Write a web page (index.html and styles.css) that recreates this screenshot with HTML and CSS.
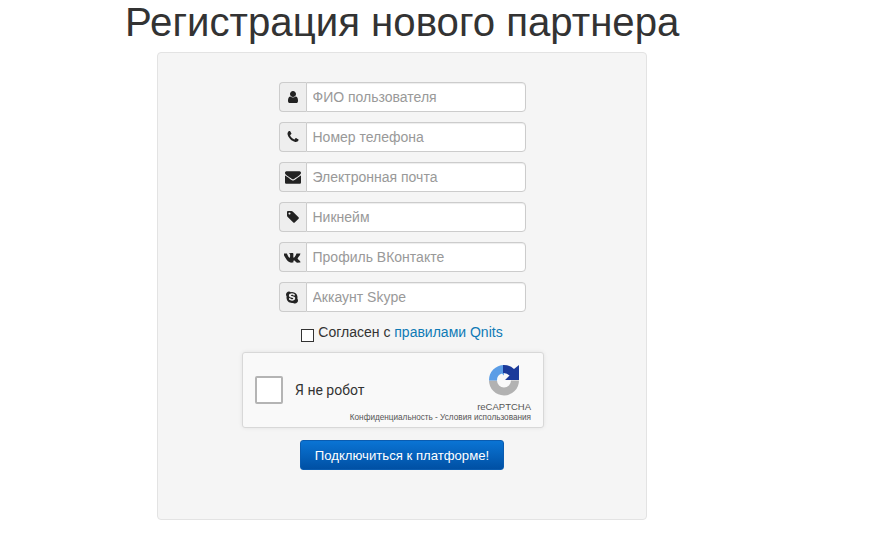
FILE: index.html
```html
<!DOCTYPE html>
<html lang="ru">
<head>
    <meta charset="UTF-8">
    <meta name="viewport" content="width=device-width, initial-scale=1.0">
    <title>Регистрация нового партнера</title>
    <link rel="stylesheet" href="styles.css">
</head>
<body>

    <h1 class="page-title">Регистрация нового партнера</h1>

    <div class="well">
        <form class="reg-form">
            <div class="input-group">
                <span class="addon">
                    <svg class="icon" viewBox="0 0 1792 1792"><path d="M1536 1399q0 109-62.5 187t-150.5 78h-854q-88 0-150.5-78t-62.5-187q0-85 8.5-160.5t31.5-152 58.5-131 94-89 134.5-34.5q131 128 313 128t313-128q76 0 134.5 34.5t94 89 58.5 131 31.5 152 8.5 160.5zm-256-887q0 159-112.5 271.5t-271.5 112.5-271.5-112.5-112.5-271.5 112.5-271.5 271.5-112.5 271.5 112.5 112.5 271.5z"/></svg>
                </span>
                <input type="text" placeholder="ФИО пользователя">
            </div>
            <div class="input-group">
                <span class="addon">
                    <svg class="icon" viewBox="0 0 1792 1792"><path d="M1600 1240q0 27-10 70.5t-21 68.5q-21 50-122 106-94 51-186 51-27 0-53-3.5t-57.5-12.5-47-14.5-55.5-20.5-49-18q-98-35-175-83-127-79-264-216t-216-264q-48-77-83-175-3-9-18-49t-20.5-55.5-14.5-47-12.5-57.5-3.5-53q0-92 51-186 56-101 106-122 25-11 68.5-21t70.5-10q14 0 21 3 18 6 53 76 11 19 30 54t35 63.5 31 53.5q3 4 17.5 25t21.5 35.5 7 28.5q0 20-28.5 50t-62 55-62 53-28.5 46q0 9 5 22.5t8.5 20.5 14 24 11.5 19q76 137 174 235t235 174q2 1 19 11.5t24 14 20.5 8.5 22.5 5q18 0 46-28.5t53-62 55-62 50-28.5q14 0 28.5 7t35.5 21.5 25 17.5q25 15 53.5 31t63.5 35 54 30q70 35 76 53 3 7 3 21z"/></svg>
                </span>
                <input type="text" placeholder="Номер телефона">
            </div>
            <div class="input-group">
                <span class="addon">
                    <svg class="icon icon-mail" viewBox="0 0 1792 1792"><path d="M1792 710v794q0 66-47 113t-113 47h-1472q-66 0-113-47t-47-113v-794q44 49 101 87 362 246 497 345 57 42 92.5 65.5t94.5 48 110 24.5h2q51 0 110-24.5t94.5-48 92.5-65.5q170-123 498-345 57-39 100-87zm0-294q0 79-49 151t-122 123q-376 261-468 325-10 7-42.5 30.5t-54 38-52 32.5-57.5 27-50 9h-2q-23 0-50-9t-57.5-27-52-32.5-54-38-42.5-30.5q-91-64-262-182.5t-205-142.5q-62-42-117-115.5t-55-136.5q0-78 41.5-130t118.5-52h1472q65 0 112.5 47t47.5 113z"/></svg>
                </span>
                <input type="text" placeholder="Электронная почта">
            </div>
            <div class="input-group">
                <span class="addon">
                    <svg class="icon" viewBox="0 0 1792 1792"><path d="M576 448q0-53-37.5-90.5t-90.5-37.5-90.5 37.5-37.5 90.5 37.5 90.5 90.5 37.5 90.5-37.5 37.5-90.5zm1067 576q0 53-37 90l-491 492q-39 37-91 37-53 0-90-37l-715-716q-38-37-64.5-101t-26.5-117v-416q0-52 38-90t90-38h416q53 0 117 26.5t102 64.5l715 714q37 39 37 91z"/></svg>
                </span>
                <input type="text" placeholder="Никнейм">
            </div>
            <div class="input-group">
                <span class="addon">
                    <svg class="icon icon-wide" viewBox="0 0 1920 1792"><path d="M1853 520q23 64-150 294-24 32-65 85-78 100-90 131-17 41 14 81 17 21 81 82h1l1 1 1 1 2 2q141 131 191 221 3 5 6.5 12.5t7 26.5-.5 34-25 27.5-59 12.5l-256 4q-24 5-56-5t-52-22l-20-12q-30-21-70-64t-68.5-77.5-61-58-56.5-15.5q-3 1-8 3.5t-17 14.5-21.5 29.5-17 52-6.5 77.5q0 15-3.5 27.5t-7.5 18.5l-4 5q-18 19-53 22h-115q-71 4-146-16.5t-131.5-53-103-66-70.5-57.5l-25-24q-10-10-27.5-30t-71.5-91-106-151-122.5-211-130.5-272q-6-16-6-27t3-16l4-6q15-19 57-19l274-2q12 2 23 6.5t16 8.5l5 3q16 11 24 32 20 50 46 103.5t41 81.5l16 29q29 60 56 104t48.5 68.5 41.5 38.5 34 14 27-5q2-1 5-5t12-22 13.5-47 9.5-81 0-125q-2-40-9-73t-14-46l-6-12q-25-34-85-43-13-2 5-24 16-19 38-30 53-26 239-24 82 1 135 13 20 5 33.5 13.5t20.5 24 10.5 32 3.5 45.5-1 55-2.5 70.5-1.5 82.5q0 11-1 42t-.5 48 3.5 40.5 11.5 39 22.5 24.5q8 2 17 4t26-11 38-34.5 52-67 68-107.5q60-104 107-225 4-10 10-17.5t11-10.5l4-3 5-2.5 13-3 20-.5 288-2q39-5 64 2.5t31 16.5z"/></svg>
                </span>
                <input type="text" placeholder="Профиль ВКонтакте">
            </div>
            <div class="input-group">
                <span class="addon">
                    <svg class="icon" viewBox="0 0 1792 1792"><path d="M1173 1063q0-50-19.5-91.5t-48.5-68.5-73-49-82.5-34-87.5-23l-104-24q-30-7-44-10.5t-35-11.5-30-16-16.5-21-7.5-30q0-77 144-77 43 0 77 12t54 28.5 38 33.5 40 29 48 12q47 0 75.5-32t28.5-77q0-55-56-99.5t-142-67.5-182-23q-68 0-132 15.5t-119.5 47-89 87-33.5 128.5q0 61 19 106.5t56 75.5 80 48.5 103 32.5l146 36q90 22 112 36 32 20 32 60 0 39-40 64.5t-105 25.5q-51 0-91.5-16t-65-38.5-45.5-45-46-38.5-54-16q-50 0-75.5 30t-25.5 75q0 92 122 157.5t291 65.5q73 0 140-18.5t122.5-53.5 88.5-93.5 33-131.5zm363 281q0 159-112.5 271.5t-271.5 112.5q-130 0-234-80-77 16-150 16-143 0-273.5-55.5t-225-150-150-225-55.5-273.5q0-73 16-150-80-104-80-234 0-159 112.5-271.5t271.5-112.5q130 0 234 80 77-16 150-16 143 0 273.5 55.5t225 150 150 225 55.5 273.5q0 73-16 150 80 104 80 234z"/></svg>
                </span>
                <input type="text" placeholder="Аккаунт Skype">
            </div>

            <label class="agree">
                <span class="agree-box"></span>
                <span>Согласен с <a href="#">правилами Qnits</a></span>
            </label>

            <div class="captcha">
                <span class="captcha-box"></span>
                <span class="captcha-label">Я не робот</span>
                <div class="captcha-brand">
                    <svg class="captcha-logo" viewBox="0 0 32 32">
                        <path d="M1 16.500A15 15 0 0 0 31 16.500L23 16.500A7 7 0 0 1 9 16.500z" fill="#b2b2b2"/>
                        <path d="M16 1A15 15 0 0 0 1 16.500L9 16.500A7 7 0 0 1 14 9.500L16 11.500z" fill="#5b9de6"/>
                        <path d="M15 1A15 15 0 0 1 26 5L31 1V16H17L21.500 11.500A8 8 0 0 0 15 9z" fill="#1b3a9a"/>
                    </svg>
                    <span class="captcha-name">reCAPTCHA</span>
                </div>
                <div class="captcha-links">Конфиденциальность - Условия использования</div>
            </div>

            <button class="submit-btn" type="button">Подключиться к платформе!</button>
        </form>
    </div>

</body>
</html>
```

FILE: styles.css
```css
* {
    box-sizing: border-box;
    font-family: "Liberation Sans", Arial, sans-serif;
}

body {
    margin: 0;
    background: white;
    color: #333;
    font-size: 14px;
}

.page-title {
    margin: 0 0 0 125px;
    height: 52px;
    font-size: 40.200px;
    font-weight: normal;
    line-height: 46px;
}

.well {
    width: 490px;
    height: 468px;
    margin-left: 157px;
    padding-top: 29px;
    background: #f5f5f5;
    border: 1px solid #e3e3e3;
    border-radius: 4px;
}

.reg-form {
    display: flex;
    flex-direction: column;
    align-items: center;
}

.input-group {
    display: flex;
    width: 247px;
    height: 30px;
    margin-bottom: 10px;
}

.addon {
    display: flex;
    align-items: center;
    justify-content: center;
    width: 27px;
    background: #eee;
    border: 1px solid #ccc;
    border-right: none;
    border-radius: 4px 0 0 4px;
}

.icon {
    width: 14px;
    height: 14px;
    fill: #222;
}

.icon-mail {
    width: 16px;
    height: 16px;
}

.icon-wide {
    width: 17px;
    height: 16px;
}

input {
    flex: 1;
    min-width: 0;
    padding: 0 6px;
    font-size: 14px;
    color: #555;
    background: white;
    border: 1px solid #ccc;
    border-radius: 0 4px 4px 0;
    box-shadow: inset 0 1px 1px rgba(0, 0, 0, 0.075);
}

input::placeholder {
    color: #999;
    opacity: 1;
}

.agree {
    display: flex;
    gap: 4px;
    align-items: flex-start;
    height: 30px;
    margin-top: 2px;
    line-height: 16px;
    color: #333;
}

.agree-box {
    width: 13px;
    height: 13px;
    margin-top: 5px;
    background: white;
    border: 1px solid #333;
}

.agree a {
    color: #0f7ab5;
    text-decoration: none;
}

.captcha {
    position: relative;
    width: 302px;
    height: 76px;
    margin: -2px 18px 0 0;
    background: #f9f9f9;
    border: 1px solid #d8d8d8;
    border-radius: 3px;
    box-shadow: 0 0 4px rgba(0, 0, 0, 0.08);
}

.captcha-box {
    position: absolute;
    left: 12px;
    top: 23px;
    width: 28px;
    height: 28px;
    background: white;
    border: 2px solid #b4b4b4;
    border-radius: 2px;
}

.captcha-label {
    position: absolute;
    left: 52px;
    top: 29px;
    font-size: 14px;
    color: #333;
    font-family: Roboto, "Liberation Sans", sans-serif;
}

.captcha-brand {
    position: absolute;
    right: 12px;
    top: 11px;
    display: flex;
    flex-direction: column;
    align-items: center;
}

.captcha-logo {
    width: 32px;
    height: 32px;
}

.captcha-name {
    margin-top: 5px;
    font-size: 9.500px;
    color: #555;
    line-height: 12px;
}

.captcha-links {
    position: absolute;
    right: 12px;
    top: 60px;
    font-size: 8.200px;
    line-height: 10px;
    color: #555;
    white-space: nowrap;
}

.submit-btn {
    width: 204px;
    height: 30px;
    margin-top: 12px;
    padding: 0;
    font-size: 13.150px;
    color: white;
    background: linear-gradient(to bottom, #0a74d4, #0050a4);
    border: 1px solid #0a5cb0;
    border-radius: 3px;
    cursor: pointer;
}
```
